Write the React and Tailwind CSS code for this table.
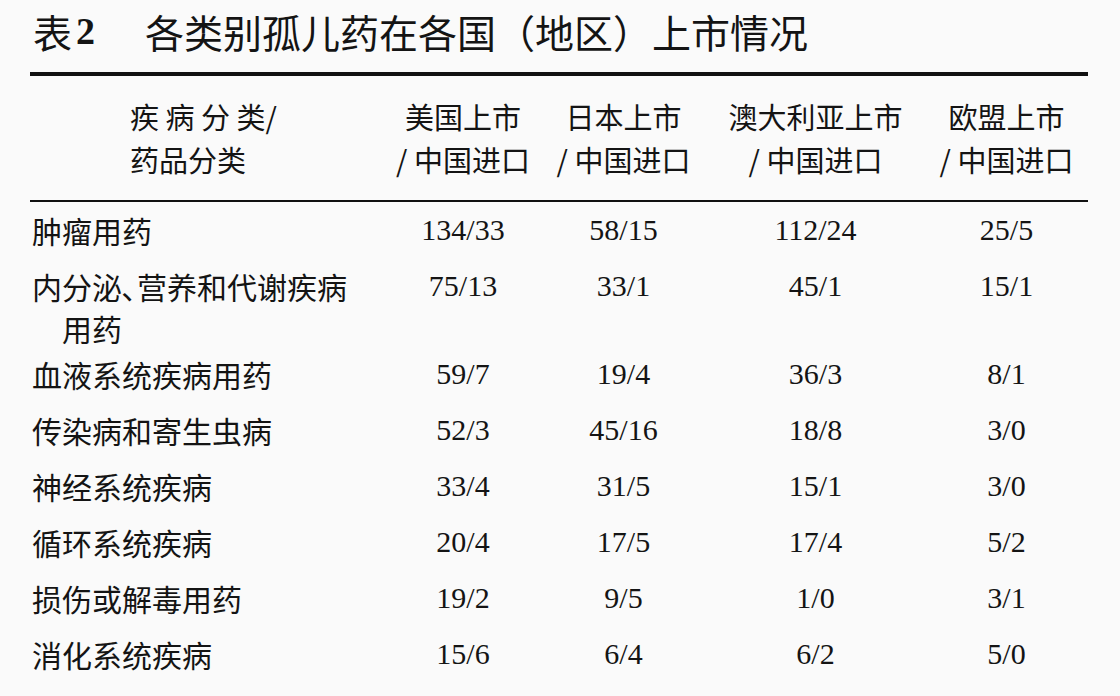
import React from "react";

const cjk = "font-['Noto_Sans_CJK_SC',sans-serif]";
const serif = "font-['Liberation_Serif','Noto_Sans_CJK_SC',serif]";

// column widths follow the printed table: category, 美国, 日本, 澳大利亚, 欧盟
const gridCols = "grid grid-cols-[355px_156px_165px_219px_163px]";

const headers = [
  ["美国上市", "/ 中国进口"],
  ["日本上市", "/ 中国进口"],
  ["澳大利亚上市", "/ 中国进口"],
  ["欧盟上市", "/ 中国进口"],
];

const rows = [
  { name: "肿瘤用药", values: ["134/33", "58/15", "112/24", "25/5"] },
  {
    name: "内分泌､营养和代谢疾病",
    extra: "用药",
    values: ["75/13", "33/1", "45/1", "15/1"],
  },
  { name: "血液系统疾病用药", values: ["59/7", "19/4", "36/3", "8/1"] },
  { name: "传染病和寄生虫病", values: ["52/3", "45/16", "18/8", "3/0"] },
  { name: "神经系统疾病", values: ["33/4", "31/5", "15/1", "3/0"] },
  { name: "循环系统疾病", values: ["20/4", "17/5", "17/4", "5/2"] },
  { name: "损伤或解毒用药", values: ["19/2", "9/5", "1/0", "3/1"] },
  { name: "消化系统疾病", values: ["15/6", "6/4", "6/2", "5/0"] },
];

const App = () => {
  return (
    <div className="w-[1120px] h-[696px] overflow-hidden bg-[#fafafa] text-[#141414]">
      {/* title */}
      <div className={`${cjk} flex items-center pl-[33px] pt-[10px] h-[52px] leading-[42px]`}>
        <span className="text-[39px]">表</span>
        <span className="font-['Liberation_Serif',serif] font-bold text-[38px] ml-[4px]">2</span>
        <span className="text-[39px] ml-[50px]">各类别孤儿药在各国（地区）上市情况</span>
      </div>

      <div className="ml-[30px] w-[1058px] mt-[20px] border-t-4 border-[#111]">
        {/* header */}
        <div className={`${gridCols} ${cjk} text-[29px] leading-[43px] py-[19px] border-b-2 border-[#111]`}>
          <div className="pl-[100px]">
            <div>疾 病 分 类/</div>
            <div>药品分类</div>
          </div>
          {headers.map((h, i) => (
            <div key={i} className="flex flex-col items-center">
              <div>{h[0]}</div>
              <div>{h[1]}</div>
            </div>
          ))}
        </div>

        {/* body */}
        {rows.map((row, i) => (
          <div
            key={i}
            className={`${gridCols} pt-[7px] leading-[42px] ${row.extra ? "h-[88px]" : "h-[56px]"}`}
          >
            <div className={`${cjk} text-[30px] pl-[2px]`}>
              <div className="whitespace-nowrap">{row.name}</div>
              {row.extra && <div className="pl-[30px]">{row.extra}</div>}
            </div>
            {row.values.map((v, j) => (
              <div key={j} className={`${serif} text-[30px] text-center`}>
                {v}
              </div>
            ))}
          </div>
        ))}
      </div>
    </div>
  );
};

export default App;
